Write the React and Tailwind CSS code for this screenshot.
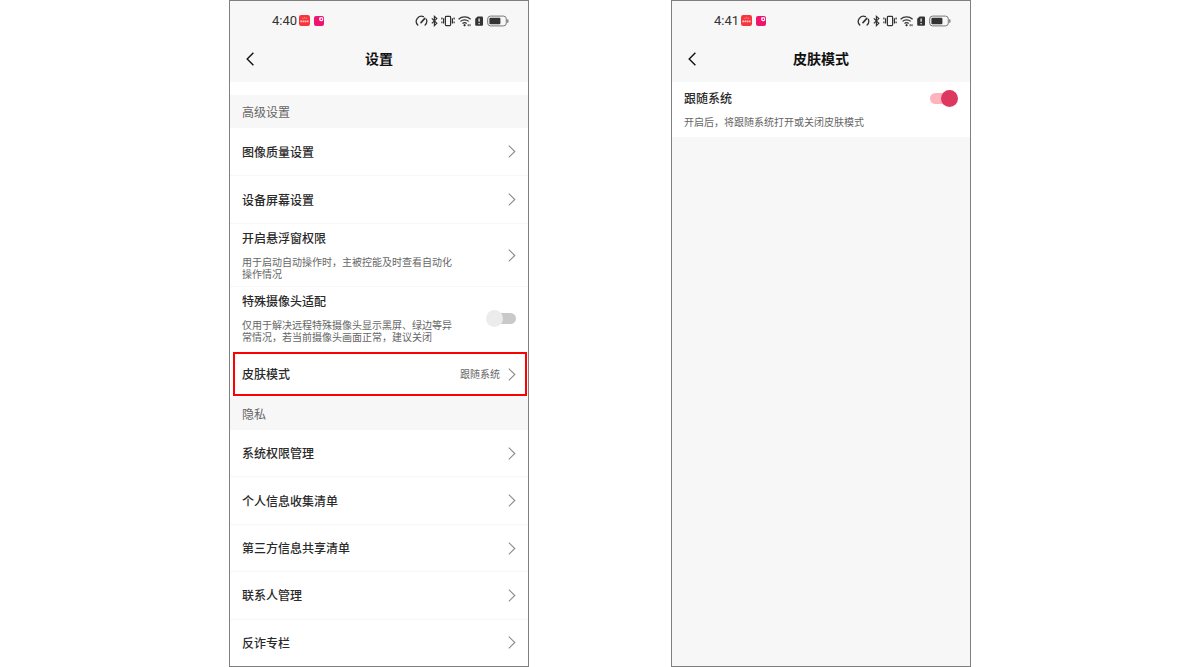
import { useId, useState } from 'react'
import clsx from 'clsx'

const privacyItems = [
    '系统权限管理',
    '个人信息收集清单',
    '第三方信息共享清单',
    '联系人管理',
    '反诈专栏',
]

function StatusBar({ time }) {
    return (
        <div className="flex h-[39px] items-center justify-between pl-[42px] pr-[19px] text-[#333]">
            <div className="flex items-center">
                <span className="w-[27px] font-['Roboto',sans-serif] text-[13px] leading-4">{time}</span>
                {/* Notification app icons */}
                <svg className="mr-1 size-[11px]" viewBox="0 0 10 10">
                    <rect width="10" height="10" rx="2" fill="#f8343c" />
                    <path d="M3 3h1M4.6 2.5h1M6.2 3h1" stroke="#ffb0a8" strokeWidth="0.8" />
                    <path d="M1.2 5.8h7.6" stroke="#ffc0b8" strokeWidth="1.8" strokeDasharray="1.6 .4" />
                </svg>
                <svg className="size-2.5" viewBox="0 0 10 10">
                    <rect width="10" height="10" rx="2" fill="#f0146e" />
                    <circle cx="7.2" cy="3.2" r="1.5" fill="#f0146e" stroke="#fff" strokeWidth="1.2" />
                    <path d="M5.2 1.8l1.4 1" stroke="#fff" />
                </svg>
            </div>
            <div className="flex items-center">
                {/* Gauge */}
                <svg className="mr-[3px] h-3 w-[13px]" viewBox="0 0 13 12" fill="none" stroke="currentColor" strokeWidth="1.3" strokeLinecap="round">
                    <path d="M2.8 10A5.1 5.1 0 0 1 8.4 1.7M11.3 4.2a5.1 5.1 0 0 1-1.2 5.8" />
                    <path d="M6 7.6L9.8 3.4" strokeWidth="1.6" />
                </svg>
                {/* Bluetooth */}
                <svg className="mr-[3px] h-3 w-[7px]" viewBox="0 0 7 12" fill="none" stroke="currentColor" strokeWidth="1.2">
                    <path d="M.8 3.4l5 4.8-2.4 2.4V1.4l2.4 2.2-5 4.8" />
                </svg>
                {/* Vibrate */}
                <svg className="mr-[3px] h-3 w-[14px]" viewBox="0 0 14 12" fill="none" stroke="currentColor" strokeWidth="1.2">
                    <rect x="4.4" y="1.4" width="5.2" height="9.2" rx=".8" />
                    <path d="M2.6 3.2v5.4M11.4 3.2v5.4" />
                    <path d="M.9 2.6v2M.9 6.6v1.6M13.1 2.6v2M13.1 6.6v1.6" />
                </svg>
                {/* Wifi */}
                <svg className="mr-[3px] h-3 w-[14px]" viewBox="0 0 14 12" fill="none" stroke="currentColor" strokeWidth="1.3">
                    <path d="M.6 4.2a9 9 0 0 1 12 0M2.5 6.4a6 6 0 0 1 8.2 0M4.5 8.5a3.2 3.2 0 0 1 4.2 0" />
                    <path d="M6.6 8.8l1.4 1.4-1.4 1.4-1.4-1.4z" fill="currentColor" stroke="none" />
                    <path d="M10.2 9.2v2M12 9.2v2" strokeWidth="1" />
                </svg>
                {/* SIM alert */}
                <svg className="mr-1 h-3 w-[8px]" viewBox="0 0 8 12">
                    <path d="M2.6 1.4H7a1 1 0 0 1 1 1v7.4a1 1 0 0 1-1 1H1.2a1 1 0 0 1-1-1V3.8z" fill="currentColor" />
                    <path d="M4.1 3.4v3.4M4.1 8v1.3" stroke="#fff" strokeWidth="1.2" />
                </svg>
                {/* Battery */}
                <svg className="h-3 w-[22px]" viewBox="0 0 22 12" fill="none">
                    <rect x=".7" y="1.1" width="18.6" height="9.8" rx="2.8" stroke="#777" />
                    <rect x="2.4" y="2.8" width="11" height="6.4" rx="1" fill="currentColor" />
                    <path d="M20.8 4.8v2.4" stroke="#777" strokeWidth="1.3" strokeLinecap="round" />
                </svg>
            </div>
        </div>
    )
}

function Phone({ time, title, className, children }) {
    return (
        <section className={clsx('flex min-h-screen w-1/4 flex-col border border-[#7f7f7f]', className)}>
            <header className="bg-[#f7f7f7]">
                <StatusBar time={time} />
                <div className="grid h-[42px] grid-cols-[40px_1fr_40px] items-start">
                    <button type="button" aria-label="返回" className="flex h-[38px] items-center pl-4">
                        <svg className="h-3.5 w-2" viewBox="0 0 8 14" fill="none" stroke="#111" strokeWidth="1.4">
                            <path d="M7.4.8L1.2 7l6.2 6.2" />
                        </svg>
                    </button>
                    <h1 className="text-center text-[14px] font-bold leading-[36px] text-[#111]">{title}</h1>
                </div>
            </header>
            {children}
        </section>
    )
}

function Chevron() {
    return (
        <svg className="h-[13px] w-[8px] shrink-0" viewBox="0 0 8 13" fill="none" stroke="#8c8c8c" strokeWidth="1.1">
            <path d="M.8.6l6 5.9-6 5.9" />
        </svg>
    )
}

function SectionTitle({ children }) {
    return <h2 className="bg-[#f7f7f7] px-3 text-[12px] leading-[33px] text-[#666]">{children}</h2>
}

function LinkRow({ label, value, description, className }) {
    return (
        <button
            type="button"
            className={clsx('flex w-full items-center justify-between px-3 text-left', className)}
        >
            <span>
                <span className="block text-[12px] font-medium leading-4 text-[#2a2a2a]">{label}</span>
                {description && (
                    <span className="mt-2.5 block max-w-[212px] text-[10px] leading-3 text-[#666]">{description}</span>
                )}
            </span>
            <span className="flex items-center gap-2">
                {value && <span className="text-[10px] leading-4 text-[#666]">{value}</span>}
                <Chevron />
            </span>
        </button>
    )
}

function SwitchRow({ label, description, defaultChecked = false, className }) {
    const id = useId()
    const [checked, setChecked] = useState(defaultChecked)

    return (
        <div className={clsx('flex justify-between px-3', className)}>
            <div>
                <label htmlFor={id} className="block text-[12px] font-medium leading-4 text-[#2a2a2a]">{label}</label>
                <p className="mt-2.5 max-w-[212px] text-[10px] leading-3 text-[#666]">{description}</p>
            </div>
            <input
                id={id}
                type="checkbox"
                role="switch"
                checked={checked}
                onChange={(e) => setChecked(e.target.checked)}
                className="relative h-[17px] w-[30px] shrink-0 appearance-none before:absolute before:inset-y-[3px] before:left-1 before:right-0 before:rounded-full before:bg-[#c9c9c9] after:absolute after:left-0 after:top-0 after:size-[17px] after:rounded-full after:bg-[#ececec] checked:before:left-0.5 checked:before:right-1 checked:before:bg-[#ffb3bd] checked:after:left-[13px] checked:after:bg-[#dc3860]"
            />
        </div>
    )
}

export default function App() {
    return (
        <main className="flex min-h-screen justify-center gap-[142px] bg-white font-['Noto_Sans_CJK_SC',sans-serif]">
            <Phone time="4:40" title="设置" className="bg-white">
                <div className="pt-[13px]">
                    <SectionTitle>高级设置</SectionTitle>
                </div>
                <LinkRow label="图像质量设置" className="h-12 border-b border-[#f7f7f7]" />
                <LinkRow label="设备屏幕设置" className="h-12 border-b border-[#f7f7f7]" />
                <LinkRow
                    label="开启悬浮窗权限"
                    description="用于启动自动操作时，主被控能及时查看自动化操作情况"
                    className="border-b border-[#f7f7f7] py-1.5"
                />
                <SwitchRow
                    label="特殊摄像头适配"
                    description="仅用于解决远程特殊摄像头显示黑屏、绿边等异常情况，若当前摄像头画面正常，建议关闭"
                    className="items-center pb-2 pt-1.5"
                />
                <div className="relative">
                    <LinkRow label="皮肤模式" value="跟随系统" className="h-[46px]" />
                    {/* Highlight */}
                    <div className="pointer-events-none absolute bottom-px left-[3px] right-px top-px border-2 border-[#f00]" />
                </div>
                <SectionTitle>隐私</SectionTitle>
                <ul className="flex flex-1 flex-col divide-y divide-[#f7f7f7]">
                    {privacyItems.map((item) => (
                        <li key={item} className="flex min-h-11 flex-1">
                            <LinkRow label={item} />
                        </li>
                    ))}
                </ul>
            </Phone>

            <Phone time="4:41" title="皮肤模式" className="bg-[#f7f7f7]">
                <SwitchRow
                    label="跟随系统"
                    description="开启后，将跟随系统打开或关闭皮肤模式"
                    defaultChecked
                    className="items-start bg-white pb-[9px] pt-2"
                />
            </Phone>
        </main>
    )
}
